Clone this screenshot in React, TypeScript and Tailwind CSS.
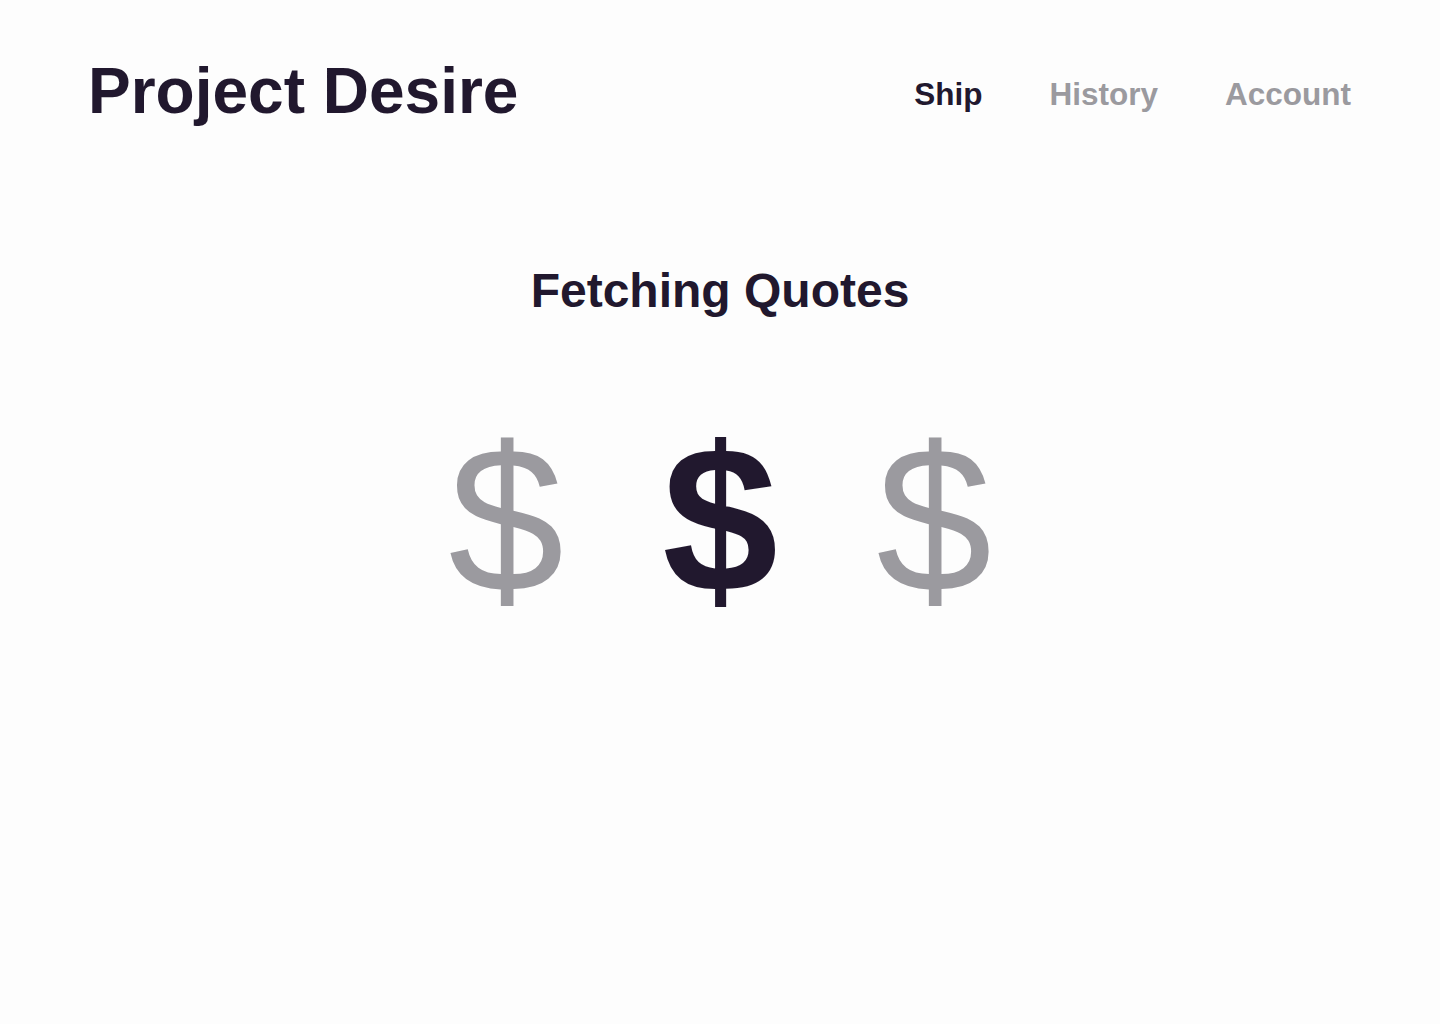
const NAV = [
  { label: "Ship", active: true },
  { label: "History", active: false },
  { label: "Account", active: false },
];

const DOLLARS = [
  { bold: false },
  { bold: true },
  { bold: false },
];

export default function App() {
  return (
    <div className="min-h-[1024px] w-full bg-[#fdfdfd] font-['Liberation_Sans',Arial,sans-serif] text-[#21182e]">
      {/* Header */}
      <header className="flex items-start justify-between pl-[88px] pr-[89px] pt-[59px]">
        <h1 className="text-[64px] font-bold leading-none">Project Desire</h1>
        <nav className="mt-[20px] flex gap-[67px] text-[31.5px] font-bold leading-none">
          {NAV.map((item) => (
            <a
              key={item.label}
              href="#"
              className={item.active ? "text-[#21182e]" : "text-[#9b9a9f]"}
            >
              {item.label}
            </a>
          ))}
        </nav>
      </header>

      {/* Loading state */}
      <main className="flex flex-col items-center">
        <h2 className="mt-[144px] text-[48px] font-bold leading-none">Fetching Quotes</h2>
        <div className="mt-[101px] flex justify-center">
          {DOLLARS.map((d, i) => (
            <span
              key={i}
              className={
                d.bold
                  ? "w-[214px] text-center text-[208px] font-bold leading-none text-[#21182e]"
                  : "w-[214px] text-center text-[208px] font-normal leading-none text-[#9b9a9f]"
              }
            >
              $
            </span>
          ))}
        </div>
      </main>
    </div>
  );
}
